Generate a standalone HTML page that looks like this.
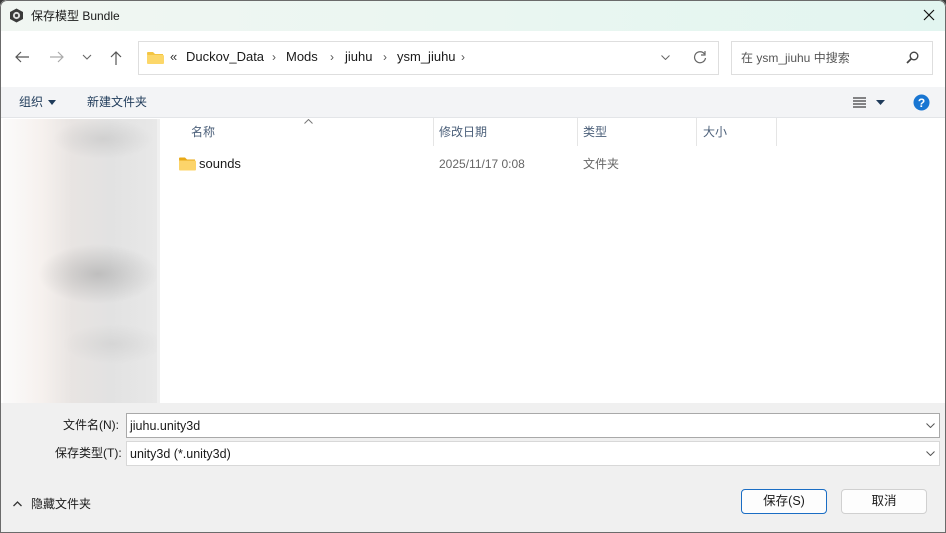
<!DOCTYPE html>
<html><head><meta charset="utf-8"><style>
*{margin:0;padding:0;box-sizing:border-box}
body{width:946px;height:533px;overflow:hidden;font-family:"Liberation Sans","Noto Sans CJK SC",sans-serif;font-size:12px;color:#1a1a1a;background:#3a3a3a;position:relative}
.win{position:absolute;left:0;top:0;width:946px;height:533px;background:#fff;border-radius:7px 7px 0 0;overflow:hidden}
.frame{position:absolute;left:0;top:0;width:946px;height:533px;border:1px solid #6b6b6b;border-radius:7px 7px 0 0;pointer-events:none}
.abs{position:absolute;line-height:14px}
.title{left:0;top:0;width:946px;height:31px;background:linear-gradient(90deg,#f1f6f2 0%,#eaf6f1 50%,#e2f5f0 100%)}
.tb{left:0;top:87px;width:946px;height:31px;background:#f3f4f6;border-bottom:1px solid #e3e5e8}
.side{left:3px;top:119px;width:154px;height:284px;background:
radial-gradient(ellipse 60px 30px at 95px 155px,rgba(160,160,160,.55),transparent),
radial-gradient(ellipse 50px 20px at 100px 20px,rgba(190,190,190,.5),transparent),
radial-gradient(ellipse 50px 20px at 110px 225px,rgba(195,195,195,.4),transparent),
linear-gradient(90deg,#fbfbfb 0%,#f6f1ee 25%,#e8e4e2 45%,#e2e2e2 70%,#e8e8e8 100%)}
.bottom{left:0;top:403px;width:946px;height:130px;background:#f0f0f0}
.inp{background:#fff;border:1px solid #a9a9a9;height:25px;font-size:12.5px;padding:4px 3px;line-height:16px}
.btn{background:#fdfdfd;border:1px solid #d0d0d0;border-radius:4px;width:86px;height:25px;text-align:center;line-height:23px;font-size:12.5px}
.hdr{color:#4c607a}
.sep{top:118px;width:1px;height:28px;background:#e5e5e5}
</style></head><body>
<div class="win">
<div class="abs title"></div>
<svg class="abs" style="left:9px;top:8px" width="15" height="15" viewBox="0 0 15 15"><polygon points="7.5,0.5 14,4 14,11 7.5,14.5 1,11 1,4" fill="#3a3a3a"/><circle cx="7.5" cy="7.5" r="3.6" fill="#ddd"/><circle cx="7.5" cy="7.5" r="1.6" fill="#3a3a3a"/></svg>
<div class="abs" style="left:31px;top:9px;font-size:12px">保存模型 Bundle</div>
<svg class="abs" style="left:923px;top:9px" width="12" height="12"><path d="M1 1L11 11M11 1L1 11" stroke="#111" stroke-width="1.2"/></svg>

<svg class="abs" style="left:14px;top:50px" width="16" height="14"><path d="M15 7H2M7 2L2 7l5 5" stroke="#555" fill="none" stroke-width="1.2"/></svg>
<svg class="abs" style="left:49px;top:50px" width="16" height="14"><path d="M1 7h13M9 2l5 5-5 5" stroke="#aaa" fill="none" stroke-width="1.2"/></svg>
<svg class="abs" style="left:82px;top:54px" width="10" height="6"><path d="M1 1l4 4 4-4" stroke="#666" fill="none" stroke-width="1.1"/></svg>
<svg class="abs" style="left:109px;top:50px" width="14" height="15"><path d="M7 15V2M2 7l5-5 5 5" stroke="#555" fill="none" stroke-width="1.2"/></svg>
<div class="abs" style="left:138px;top:41px;width:581px;height:34px;border:1px solid #dedede;background:#fff"></div>
<svg class="abs" style="left:147px;top:51px" width="17" height="13"><path d="M0 2a1 1 0 0 1 1-1h5l2 2h8v9a1 1 0 0 1-1 1H1z" fill="#f4c542"/><rect x="0" y="4" width="17" height="9" rx="1" fill="#fcd769"/></svg>
<div class="abs" style="left:170px;top:50px;font-size:13px;color:#333">«</div>
<div class="abs" style="left:186px;top:50px;font-size:13px">Duckov_Data</div>
<div class="abs" style="left:272px;top:50px;font-size:12px;color:#555">›</div>
<div class="abs" style="left:286px;top:50px;font-size:13px">Mods</div>
<div class="abs" style="left:330px;top:50px;font-size:12px;color:#555">›</div>
<div class="abs" style="left:345px;top:50px;font-size:13px">jiuhu</div>
<div class="abs" style="left:383px;top:50px;font-size:12px;color:#555">›</div>
<div class="abs" style="left:397px;top:50px;font-size:13px">ysm_jiuhu</div>
<div class="abs" style="left:461px;top:50px;font-size:12px;color:#555">›</div>
<svg class="abs" style="left:661px;top:55px" width="9" height="5"><path d="M0.5 0.5l4 4 4-4" stroke="#666" fill="none"/></svg>
<svg class="abs" style="left:693px;top:50px" width="14" height="14"><path d="M11.5 4A5.5 5.5 0 1 0 12.5 8" stroke="#666" fill="none" stroke-width="1.2"/><path d="M12 1v4h-4" stroke="#666" fill="none" stroke-width="1.2"/></svg>
<div class="abs" style="left:731px;top:41px;width:202px;height:34px;border:1px solid #dedede;background:#fff"></div>
<div class="abs" style="left:741px;top:51px;font-size:12px;color:#555">在 ysm_jiuhu 中搜索</div>
<svg class="abs" style="left:906px;top:51px" width="13" height="13"><circle cx="8" cy="5" r="3.8" stroke="#444" fill="none" stroke-width="1.4"/><path d="M5.5 7.5L1 12" stroke="#444" stroke-width="1.8"/></svg>

<div class="abs tb"></div>
<div class="abs" style="left:19px;top:95px;font-size:12px;color:#1f3b5a">组织</div>
<svg class="abs" style="left:48px;top:100px" width="8" height="5"><path d="M0 0h8L4 5z" fill="#1f3b5a"/></svg>
<div class="abs" style="left:87px;top:95px;font-size:12px;color:#1f3b5a">新建文件夹</div>
<svg class="abs" style="left:853px;top:97px" width="13" height="11"><path d="M0 1h13M0 4h13M0 7h13M0 10h13" stroke="#111" stroke-width="1"/></svg>
<svg class="abs" style="left:876px;top:100px" width="9" height="5"><path d="M0 0h9L4.5 5z" fill="#1f3b5a"/></svg>
<svg class="abs" style="left:913px;top:94px" width="17" height="17"><circle cx="8.5" cy="8.5" r="8" fill="#1976d2"/><text x="8.5" y="13" text-anchor="middle" fill="#fff" font-size="12" font-weight="bold" font-family="Liberation Sans">?</text></svg>

<div class="abs side"></div>
<div class="abs" style="left:157px;top:119px;width:3px;height:284px;background:#f0f0f0"></div>
<svg class="abs" style="left:304px;top:119px" width="9" height="5"><path d="M0.5 4.5l4-4 4 4" stroke="#777" fill="none"/></svg>
<div class="abs hdr" style="left:191px;top:125px">名称</div>
<div class="abs sep" style="left:433px"></div>
<div class="abs hdr" style="left:439px;top:125px">修改日期</div>
<div class="abs sep" style="left:577px"></div>
<div class="abs hdr" style="left:583px;top:125px">类型</div>
<div class="abs sep" style="left:696px"></div>
<div class="abs hdr" style="left:703px;top:125px">大小</div>
<div class="abs sep" style="left:776px"></div>
<svg class="abs" style="left:179px;top:157px" width="17" height="14"><path d="M0 1.5a1 1 0 0 1 1-1h5l2 2h8v10a1 1 0 0 1-1 1H1z" fill="#e9a916"/><rect x="0" y="3.5" width="17" height="10" rx="1" fill="#fcd46a"/></svg>
<div class="abs" style="left:199px;top:157px;font-size:13px">sounds</div>
<div class="abs" style="left:439px;top:157px;color:#666">2025/11/17 0:08</div>
<div class="abs" style="left:583px;top:157px;color:#666">文件夹</div>

<div class="abs bottom"></div>
<div class="abs" style="left:63px;top:418px">文件名(N):</div>
<div class="abs inp" style="left:126px;top:413px;width:814px">jiuhu.unity3d</div>
<div class="abs" style="left:55px;top:446px">保存类型(T):</div>
<div class="abs inp" style="left:126px;top:441px;width:814px;border-color:#d8d8d8">unity3d (*.unity3d)</div>
<svg class="abs" style="left:926px;top:423px" width="9" height="5"><path d="M0.5 0.5l4 4 4-4" stroke="#555" fill="none"/></svg>
<svg class="abs" style="left:926px;top:451px" width="9" height="5"><path d="M0.5 0.5l4 4 4-4" stroke="#555" fill="none"/></svg>
<svg class="abs" style="left:13px;top:501px" width="9" height="6"><path d="M0.5 5l4-4 4 4" stroke="#333" fill="none" stroke-width="1.3"/></svg>
<div class="abs" style="left:31px;top:497px">隐藏文件夹</div>
<div class="abs btn" style="left:741px;top:489px;border-color:#1a6dc4">保存(S)</div>
<div class="abs btn" style="left:841px;top:489px">取消</div>
<div class="frame"></div>
</div>
</body></html>
